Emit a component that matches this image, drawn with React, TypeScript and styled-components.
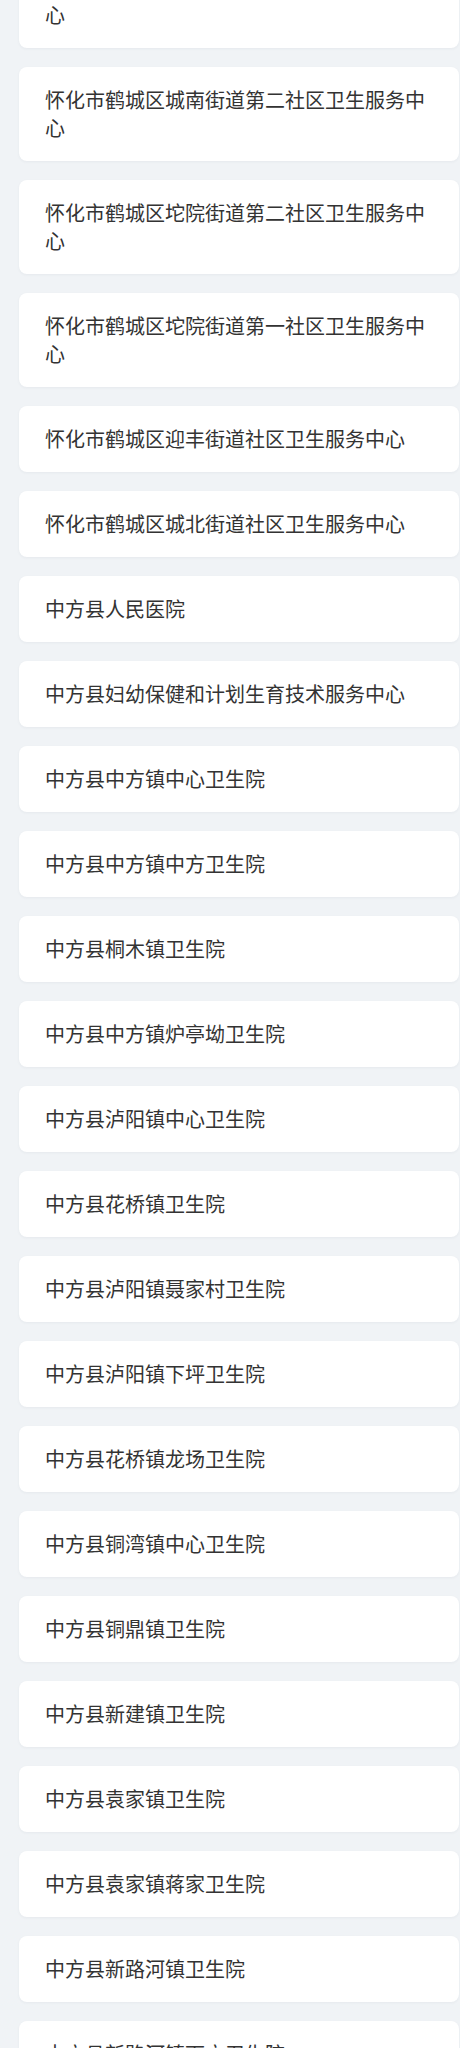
import React from 'react'
import styled, { createGlobalStyle } from 'styled-components'

const GlobalStyle = createGlobalStyle`
  html, body {
    margin: 0;
    padding: 0;
    background: #f0f3f6;
    font-family: "Noto Sans CJK SC", "Noto Sans", sans-serif;
  }
`

const List = styled.div`
  display: flex;
  flex-direction: column;
  gap: 19px;
  margin-top: -46px;
  padding: 0 1px 40px 19px;
`

const Card = styled.div`
  background: #ffffff;
  border-radius: 8px;
  padding: 19px 26px;
  box-shadow: 0 1px 3px rgba(30, 50, 80, 0.05);
  color: #333333;
  font-size: 20px;
  line-height: 28px;
`

const hospitals = [
  '怀化市鹤城区城南街道第一社区卫生服务中心',
  '怀化市鹤城区城南街道第二社区卫生服务中心',
  '怀化市鹤城区坨院街道第二社区卫生服务中心',
  '怀化市鹤城区坨院街道第一社区卫生服务中心',
  '怀化市鹤城区迎丰街道社区卫生服务中心',
  '怀化市鹤城区城北街道社区卫生服务中心',
  '中方县人民医院',
  '中方县妇幼保健和计划生育技术服务中心',
  '中方县中方镇中心卫生院',
  '中方县中方镇中方卫生院',
  '中方县桐木镇卫生院',
  '中方县中方镇炉亭坳卫生院',
  '中方县泸阳镇中心卫生院',
  '中方县花桥镇卫生院',
  '中方县泸阳镇聂家村卫生院',
  '中方县泸阳镇下坪卫生院',
  '中方县花桥镇龙场卫生院',
  '中方县铜湾镇中心卫生院',
  '中方县铜鼎镇卫生院',
  '中方县新建镇卫生院',
  '中方县袁家镇卫生院',
  '中方县袁家镇蒋家卫生院',
  '中方县新路河镇卫生院',
  '中方县新路河镇下方卫生院',
]

const App = () => {
  return (
    <>
      <GlobalStyle />
      <List>
        {hospitals.map((name) => (
          <Card key={name}>{name}</Card>
        ))}
      </List>
    </>
  )
}

export default App
